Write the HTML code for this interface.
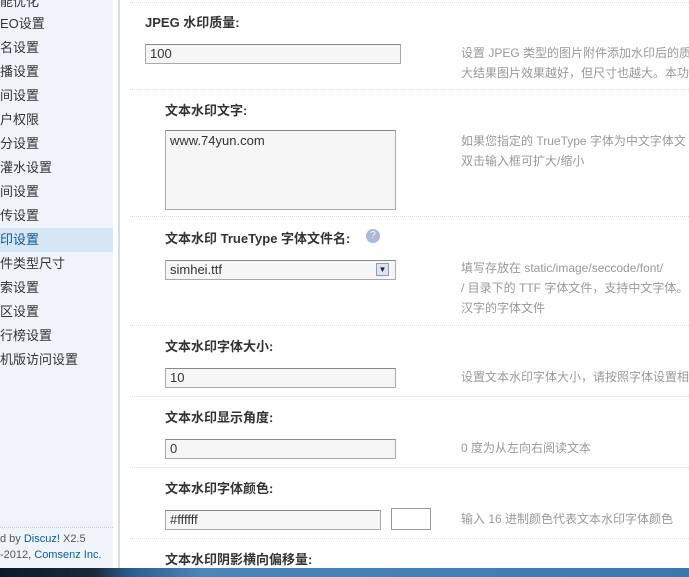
<!DOCTYPE html><html><head><meta charset="utf-8"><style>
body{margin:0;width:689px;height:577px;overflow:hidden;background:#fff;font-family:"Liberation Sans","Noto Sans CJK SC",sans-serif;font-size:12px;color:#333;position:relative}
.a{position:absolute;white-space:nowrap}
#side{position:absolute;left:0;top:0;width:113px;height:568px;background:#eef4fa}
#bar{position:absolute;left:118px;top:0;width:2px;height:568px;background:#d8dde3}
.m{position:absolute;left:0;width:113px;height:24px;line-height:24px;font-size:13px;color:#333;}
.act{background:#d6e6f4;color:#105a91}
.l{font-weight:bold;font-size:13px;color:#333}
.d{color:#999;font-size:12px;line-height:20px}
.sep{position:absolute;left:130px;width:559px;border-top:1px dotted #ddd;height:0}
.in{position:absolute;border:1px solid #aaa;border-top-color:#888;background:#f6f6f6;height:18px;line-height:18px;padding-left:4px;font-size:13px;color:#333;box-sizing:content-box}
</style></head><body>
<div id="side"></div><div id="bar"></div>
<div class="m" style="top:-10px">能优化</div>
<div class="m" style="top:12px">EO设置</div>
<div class="m" style="top:36px">名设置</div>
<div class="m" style="top:60px">播设置</div>
<div class="m" style="top:84px">间设置</div>
<div class="m" style="top:108px">户权限</div>
<div class="m" style="top:132px">分设置</div>
<div class="m" style="top:156px">灌水设置</div>
<div class="m" style="top:180px">间设置</div>
<div class="m" style="top:204px">传设置</div>
<div class="m act" style="top:228px">印设置</div>
<div class="m" style="top:252px">件类型尺寸</div>
<div class="m" style="top:276px">索设置</div>
<div class="m" style="top:300px">区设置</div>
<div class="m" style="top:324px">行榜设置</div>
<div class="m" style="top:348px">机版访问设置</div>
<div style="position:absolute;left:0;top:527px;width:113px;border-top:1px dotted #ccc"></div>
<div class="a" style="left:0;top:533px;font-size:11px;color:#555">d by <span style="color:#105a91">Discuz!</span> X2.5</div>
<div class="a" style="left:0;top:549px;font-size:11px;color:#555">-2012, <span style="color:#105a91">Comsenz Inc.</span></div>

<div class="sep" style="top:2px"></div>
<div class="a l" style="left:145px;top:12px">JPEG 水印质量:</div>
<div class="in" style="left:145px;top:44px;width:250px">100</div>
<div class="a d" style="left:461px;top:43px">设置 JPEG 类型的图片附件添加水印后的质</div>
<div class="a d" style="left:461px;top:63px">大结果图片效果越好，但尺寸也越大。本功</div>
<div class="sep" style="top:89px"></div>
<div class="a l" style="left:165px;top:100px">文本水印文字:</div>
<div class="in" style="left:165px;top:130px;width:225px;height:78px;line-height:20px">www.74yun.com</div>
<div class="a d" style="left:461px;top:131px">如果您指定的 TrueType 字体为中文字体文</div>
<div class="a d" style="left:461px;top:151px">双击输入框可扩大/缩小</div>
<div class="sep" style="top:216px"></div>
<div class="a l" style="left:165px;top:228px">文本水印 TrueType 字体文件名:</div>
<div class="a" style="left:366px;top:229px;width:14px;height:14px;border-radius:7px;background:#a9b9d6;color:#fff;font-size:10px;text-align:center;line-height:14px">?</div>
<div class="in" style="left:165px;top:260px;width:225px">simhei.ttf</div>
<div class="a" style="left:376px;top:263px;width:13px;height:13px;background:#dde3ee;border:1px solid #99a;box-sizing:border-box;font-size:8px;text-align:center;line-height:12px;color:#223">▼</div>
<div class="a d" style="left:461px;top:258px">填写存放在 static/image/seccode/font/</div>
<div class="a d" style="left:461px;top:278px">/ 目录下的 TTF 字体文件，支持中文字体。</div>
<div class="a d" style="left:461px;top:298px">汉字的字体文件</div>
<div class="sep" style="top:325px"></div>
<div class="a l" style="left:165px;top:336px">文本水印字体大小:</div>
<div class="in" style="left:165px;top:368px;width:225px">10</div>
<div class="a d" style="left:461px;top:367px">设置文本水印字体大小，请按照字体设置相</div>
<div class="sep" style="top:396px"></div>
<div class="a l" style="left:165px;top:407px">文本水印显示角度:</div>
<div class="in" style="left:165px;top:439px;width:225px">0</div>
<div class="a d" style="left:461px;top:438px">0 度为从左向右阅读文本</div>
<div class="sep" style="top:467px"></div>
<div class="a l" style="left:165px;top:478px">文本水印字体颜色:</div>
<div class="in" style="left:165px;top:510px;width:210px">#ffffff</div>
<div class="a" style="left:391px;top:508px;width:38px;height:20px;border:1px solid #999;background:#fff"></div>
<div class="a d" style="left:461px;top:509px">输入 16 进制颜色代表文本水印字体颜色</div>
<div class="sep" style="top:538px"></div>
<div class="a l" style="left:165px;top:549px">文本水印阴影横向偏移量:</div>
<div style="position:absolute;left:0;top:568px;width:689px;height:9px;background:linear-gradient(90deg,#0a1a2a 0,#1a2a3a 95px,#2a5a8a 128px,#4a86b8 200px,#3a78b0 689px)"></div>
</body></html>
